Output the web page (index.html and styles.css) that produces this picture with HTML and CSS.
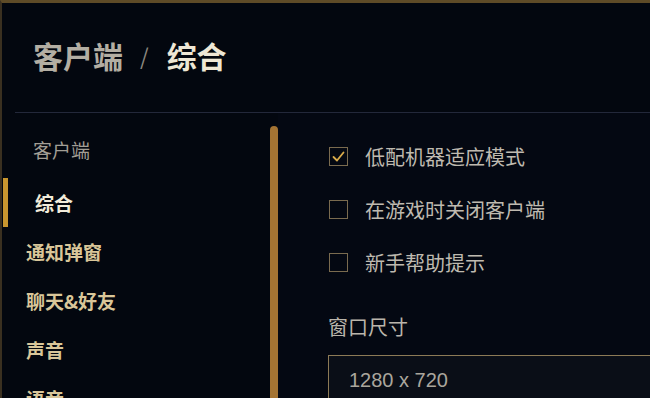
FILE: index.html
```html
<!DOCTYPE html>
<html lang="zh-CN">
<head>
<meta charset="utf-8">
<title>客户端 / 综合</title>
<link rel="stylesheet" href="styles.css">
</head>
<body>
<div class="frame">
  <header class="header">
    <h1 class="title"><span class="crumb">客户端</span><span class="sep">/</span><span class="current">综合</span></h1>
  </header>
  <div class="main">
    <aside class="sidebar">
      <nav class="nav">
        <div class="cat">客户端</div>
        <div class="item active">综合</div>
        <div class="item">通知弹窗</div>
        <div class="item">聊天&amp;好友</div>
        <div class="item">声音</div>
        <div class="item">语音</div>
      </nav>
      <div class="scroll"></div>
    </aside>
    <section class="content">
      <div class="row">
        <span class="box checked"><svg viewBox="0 0 19 19" width="19" height="19"><polyline points="4.5,10 8,13.5 14.5,5.5" fill="none" stroke="#d9ab4a" stroke-width="1.8" stroke-linecap="round" stroke-linejoin="round"/></svg></span>
        <span class="label">低配机器适应模式</span>
      </div>
      <div class="row">
        <span class="box"></span>
        <span class="label">在游戏时关闭客户端</span>
      </div>
      <div class="row">
        <span class="box"></span>
        <span class="label">新手帮助提示</span>
      </div>
      <div class="field-label">窗口尺寸</div>
      <div class="select">1280 x 720</div>
    </section>
  </div>
</div>
</body>
</html>
```

FILE: styles.css
```css
html, body {
  margin: 0;
  padding: 0;
  height: 100%;
  overflow: hidden;
  background: #03070f;
}
body {
  font-family: "Noto Sans CJK SC", "Noto Sans", sans-serif;
}
.frame {
  box-sizing: border-box;
  height: 100vh;
  border-top: 3px solid #5e4b27;
  border-left: 2px solid #3a3020;
  display: flex;
  flex-direction: column;
  overflow: hidden;
}
.header {
  box-sizing: border-box;
  height: 110px;
  flex-shrink: 0;
  margin-left: 13px;
  padding-left: 18px;
  padding-bottom: 5px;
  border-bottom: 1px solid #23283a;
  display: flex;
  align-items: center;
}
.title {
  margin: 0;
  font-size: 30px;
  font-weight: 700;
  line-height: 1;
  display: flex;
  align-items: center;
}
.crumb { color: #b3aea3; }
.sep {
  color: #8d8981;
  font-weight: 400;
  font-size: 22px;
  margin: 0 18px 0 17px;
}
.current { color: #eee7d5; }
.main {
  flex: 1;
  display: flex;
  min-height: 0;
  overflow: hidden;
}
.sidebar {
  width: 276px;
  display: flex;
  flex-shrink: 0;
}
.nav {
  flex: 1;
  padding-top: 24px;
}
.cat {
  line-height: 25px;
  padding-left: 31px;
  font-size: 19px;
  color: #a29e95;
  margin-bottom: 16px;
}
.item {
  height: 49px;
  line-height: 49px;
  padding-left: 24px;
  font-size: 19px;
  font-weight: 700;
  color: #d9c699;
}
.item.active {
  margin-left: 1px;
  border-left: 5px solid #c8962f;
  padding-left: 27px;
  color: #f1ebda;
}
.scroll {
  width: 8px;
  margin-top: 13px;
  border-radius: 4px 4px 0 0;
  background: #a47433;
}
.content {
  flex: 1;
  padding-top: 17px;
  padding-left: 50px;
  background: #040812;
}
.row {
  height: 53px;
  display: flex;
  align-items: center;
}
.box {
  box-sizing: border-box;
  width: 19px;
  height: 19px;
  border: 1.5px solid #7a6b4f;
  display: flex;
  align-items: center;
  justify-content: center;
  margin-left: 1px;
}
.box svg { display: block; flex-shrink: 0; }
.label {
  margin-left: 17px;
  font-size: 20px;
  color: #bfbab0;
  line-height: 1;
}
.field-label {
  margin-top: 26px;
  line-height: 24px;
  font-size: 20px;
  color: #bab5ab;
}
.select {
  margin-top: 16px;
  margin-right: -20px;
  height: 48px;
  border: 1px solid #8c7a56;
  border-bottom: none;
  background: #0a0e17;
  padding-left: 20px;
  line-height: 48px;
  font-family: "Liberation Sans", Arial, sans-serif;
  font-size: 20px;
  color: #aaa69d;
}
```
